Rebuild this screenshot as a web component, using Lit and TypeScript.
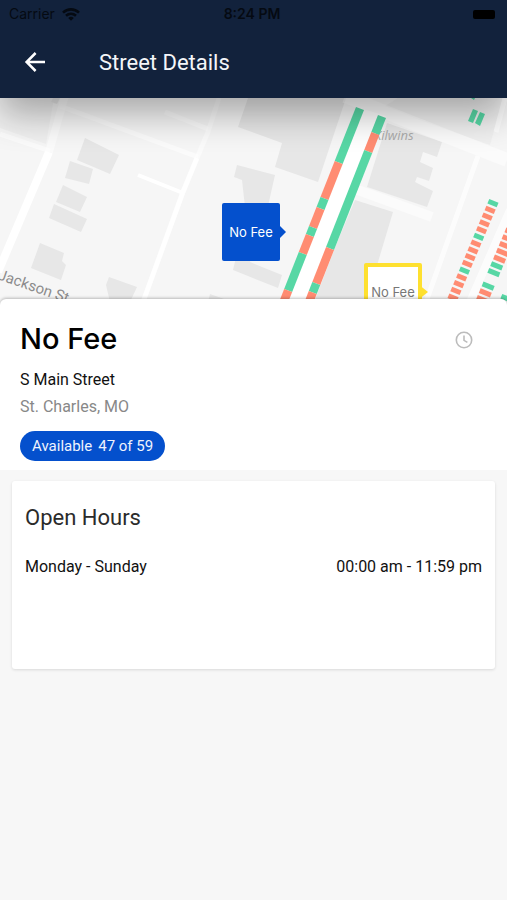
import { LitElement, html, svg, css } from "lit";
import { customElement } from "lit/decorators.js";

const MAP_W = 507;
const MAP_H = 204;

// Buildings, as polygons in map units.
const BUILDINGS = [
  "85,40 119,57 110,76 77,62",
  "70,63 93,71 89,86 65,80",
  "63,87 87,99 80,114 56,104",
  "54,106 87,121 81,134 49,120",
  "40,145 64,155 62,163 66,167 61,182 31,170",
  "109,179 137,189 130,204 110,204 106,187",
  "53,0 60,0 57,6 51,4",
  "248,0 346,0 318,84 275,69 282,45 238,29",
  "237,67 275,77 268,108 250,164 282,177 278,190 233,172 246,118 242,82 234,79",
  "210,196 224,201 224,204 208,204",
  "387,25 442,44 437,59 423,54 420,64 433,70 429,83 417,79 415,84 433,93 427,109 367,89",
  "355,102 393,114 372,184 366,204 312,204",
];

type Run = [end: number, kind: "g" | "r"];

// Kerb strips: start point, slope (x per y) and the y at which each run ends.
const STRIPS: { x: number; y: number; slope: number; runs: Run[] }[] = [
  {
    x: 360, y: 10, slope: -75 / 190,
    runs: [[64, "g"], [100, "r"], [110, "g"], [129, "r"], [137, "g"], [155, "r"], [192, "g"], [204, "r"]],
  },
  {
    x: 382, y: 18, slope: -72 / 183,
    runs: [[35, "g"], [53, "r"], [150, "g"], [185, "r"], [194, "g"], [204, "r"]],
  },
];

// Angled bays, one letter per bay; a space leaves a bay empty.
const BAYS = [
  { x: 493, y: 105, bays: "grrrrgrrrrgrrrr", w: 10 },
  { x: 511, y: 134, bays: "rrrrrgg grr", w: 12 },
  { x: 506, y: 200, bays: "g", w: 10 },
];

const PINS = [
  { label: "No Fee", x: 222, y: 105, kind: "active" },
  { label: "No Fee", x: 364, y: 165, kind: "plain" },
];

@customElement("street-map")
class StreetMap extends LitElement {
  static styles = css`
    :host {
      display: block;
      position: relative;
      overflow: hidden;
      aspect-ratio: 507 / 204;
      background: #f6f6f6;
    }
    svg { display: block; width: 100%; height: 100%; }
    .building { fill: #e7e7e7; }
    .block { fill: #f0f0f0; }
    .road { fill: none; stroke: #fff; }
    .g { fill: #57d7a5; }
    .r { fill: #ff8c72; }
    .street { font: 15px Roboto, sans-serif; fill: #8c8c8c; }
    .place { font: italic 13px "Open Sans", sans-serif; fill: #aaa; }
    .pin {
      position: absolute;
      box-sizing: border-box;
      width: 58px;
      height: 58px;
      padding: 0;
      border: 0;
      border-radius: 2px;
      font: 13px Inter, sans-serif;
      white-space: nowrap;
    }
    .pin::after {
      content: "";
      position: absolute;
      left: 100%;
      top: 50%;
      width: 6px;
      height: 12px;
      transform: translateY(-50%);
      clip-path: polygon(0 0, 100% 50%, 0 100%);
      background: #0450cd;
    }
    .active { background: #0450cd; color: #fff; }
    .plain { border: 4px solid #fee02f; background: #fff; color: #777; }
    .plain::after { background: #fee02f; width: 10px; height: 16px; left: 100%; }
  `;

  private strip(s: (typeof STRIPS)[number]) {
    let top = s.y;
    return s.runs.map(([end, kind]) => {
      const x1 = s.x + (top - s.y) * s.slope;
      const x2 = s.x + (end - s.y) * s.slope;
      const shape = svg`<polygon class=${kind}
        points="${x1 - 4},${top - 1} ${x1 + 4},${top + 2} ${x2 + 4},${end + 2} ${x2 - 4},${end - 1}"></polygon>`;
      top = end;
      return shape;
    });
  }

  private bayRow(row: (typeof BAYS)[number]) {
    return [...row.bays].map((kind, i) =>
      kind === " "
        ? null
        : svg`<rect class=${kind} x=${-row.w / 2} y="-2.4" width=${row.w} height="5"
            transform="translate(${row.x - i * 2.85} ${row.y + i * 6.75}) rotate(22)"></rect>`,
    );
  }

  render() {
    return html`
      <svg viewBox="0 0 ${MAP_W} ${MAP_H}" aria-hidden="true">
        <polygon class="block" points="398,0 503,0 490,47 420,22 385,8"></polygon>
        <polygon class="block" points="0,0 54,0 46,46 0,30"></polygon>
        <path class="road" stroke-width="8" d="M49 54 L-2 174"></path>
        <path class="road" stroke-width="8" opacity=".5" d="M65 -2 L49 54"></path>
        <path class="road" stroke-width="5" opacity=".55" d="M0 36 L50 53 M60 8 L198 59 M165 14 L208 31"></path>
        <path class="road" stroke-width="5" opacity=".5" d="M219 0 L208 34 L197 60"></path>
        <path class="road" stroke-width="5" d="M197 60 L183 94 L143 204"></path>
        <path class="road" stroke-width="4" d="M138 77 L183 95"></path>
        ${BUILDINGS.map((p) => svg`<polygon class="building" points=${p}></polygon>`)}
        <path class="road" stroke-width="14" opacity=".5" d="M345 -2 L400 20 L507 62"></path>
        <path class="road" stroke-width="5" opacity=".7" d="M505 0 L496 34 M478 58 L426 204"></path>
        <path class="road" stroke-width="10" d="M355 91 L432 119" opacity=".5"></path>
        <path class="road" stroke-width="8" opacity=".7" d="M510 112 L470 204"></path>
        <polygon points="360,10 386,18 314,204 283,204" fill="#fff"></polygon>
        <text class="place" x="374" y="42">Kilwins</text>
        ${STRIPS.map((s) => this.strip(s))}
        ${BAYS.map((b) => this.bayRow(b))}
        <polygon class="g" points="473,11 478,13 473,25 468,23"></polygon>
        <polygon class="g" points="480,14 485,16 480,28 475,25"></polygon>
        <polygon class="g" points="471,0 475,0 474,2"></polygon>
        <text class="street" transform="translate(-3 181) rotate(19)">Jackson St</text>
      </svg>
      ${PINS.map(
        (p) => html`<button
          class="pin ${p.kind}"
          style="left:${(p.x / MAP_W) * 100}%;top:${(p.y / MAP_H) * 100}%"
        >${p.label}</button>`,
      )}
    `;
  }
}

@customElement("app-root")
class AppRoot extends LitElement {
  static styles = css`
    :host {
      display: block;
      min-height: 100vh;
      background: #f7f7f7;
      color: #111;
      font: 16px/27px Roboto, sans-serif;
    }
    h1, h2, h3, p, dl, dd { margin: 0; font-weight: 400; }
    .top {
      position: relative;
      z-index: 1;
      background: #12223c;
      box-shadow: 0 16px 36px rgba(0, 0, 0, 0.32);
    }
    .status {
      display: grid;
      grid-template-columns: 1fr auto 1fr;
      align-items: center;
      height: 28px;
      padding: 0 12px 0 9px;
      color: #050a12;
      font: 14px/16px Inter, sans-serif;
    }
    .carrier { display: flex; align-items: center; gap: 7px; }
    .time { font-weight: 600; }
    .battery { justify-self: end; width: 22px; height: 9px; border-radius: 2px; background: #000; }
    .bar { display: flex; align-items: center; gap: 51px; height: 70px; padding: 0 23px; }
    .bar h1 { color: #f4f6f9; font-size: 22px; padding-bottom: 2px; }
    .back { display: flex; padding: 0 0 2px; border: 0; background: none; color: #fff; }
    .sheet {
      position: relative;
      z-index: 2;
      margin-top: -3px;
      padding: 24px 20px 9px;
      border-radius: 6px 6px 0 0;
      background: #fff;
      box-shadow: 0 -1px 3px rgba(0, 0, 0, 0.25);
      clip-path: inset(-8px 0 0 0);
    }
    .head { display: flex; align-items: center; justify-content: space-between; padding-right: 14px; margin-bottom: 11px; }
    .head h2 { font: 500 29px/32px Inter, sans-serif; color: #000; }
    .clock { display: block; padding-top: 2px; }
    .muted { color: #888; }
    .pill {
      display: inline-flex;
      gap: 6px;
      margin-top: 11px;
      padding: 0 12px;
      border-radius: 15px;
      background: #0450cd;
      color: #eef3fd;
      font-size: 15px;
      line-height: 30px;
      vertical-align: top;
    }
    .card {
      box-sizing: border-box;
      min-height: 188px;
      margin: 11px 12px;
      padding: 23px 13px;
      border-radius: 3px;
      background: #fff;
      box-shadow: 0 1px 3px rgba(0, 0, 0, 0.12);
    }
    .card h3 { color: #2b2b2b; font-size: 22px; line-height: 28px; margin-bottom: 21px; }
    .row { display: flex; justify-content: space-between; }
  `;

  render() {
    return html`
      <header class="top">
        <div class="status">
          <span class="carrier">Carrier
            <svg width="18" height="13" viewBox="0 0 18 13" fill="none" stroke="#050a12" stroke-width="2.6" aria-hidden="true">
              <path d="M1 4.6 C5.6 .3 12.4 .3 17 4.6"></path>
              <path d="M4 7.8 C7 5.1 11 5.1 14 7.8"></path>
              <path d="M6.2 10 Q9 7.6 11.8 10 L9 12.8Z" fill="#050a12" stroke="none"></path>
            </svg>
          </span>
          <span class="time">8:24 PM</span>
          <span class="battery"></span>
        </div>
        <div class="bar">
          <button class="back" aria-label="Back">
            <svg width="25" height="24" viewBox="0 0 25 24" fill="none" stroke="currentColor" stroke-width="2.5">
              <path d="M22 12 H4 M12.6 3 L3.6 12 L12.6 21"></path>
            </svg>
          </button>
          <h1>Street Details</h1>
        </div>
      </header>
      <street-map></street-map>
      <section class="sheet">
        <div class="head">
          <h2>No Fee</h2>
          <svg class="clock" width="18" height="18" viewBox="0 0 18 18" fill="none" stroke="#bcbcbc" stroke-width="1.6" aria-hidden="true">
            <circle cx="9" cy="9" r="7.7"></circle>
            <path d="M9 4.6 V9.4 L12.4 11.4"></path>
          </svg>
        </div>
        <p>S Main Street</p>
        <p class="muted">St. Charles, MO</p>
        <div class="pill"><span>Available</span><span>47 of 59</span></div>
      </section>
      <section class="card">
        <h3>Open Hours</h3>
        <dl class="row">
          <dt>Monday - Sunday</dt>
          <dd>00:00 am - 11:59 pm</dd>
        </dl>
      </section>
    `;
  }
}
